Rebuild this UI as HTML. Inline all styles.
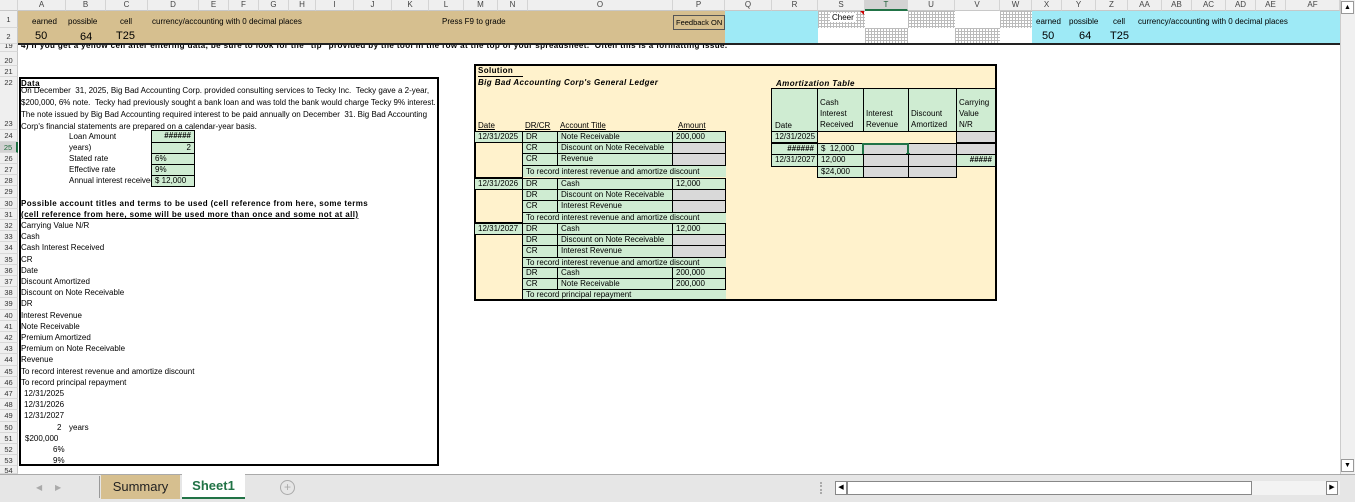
<!DOCTYPE html>
<html><head><meta charset="utf-8"><style>
*{margin:0;padding:0;box-sizing:border-box}
body{width:1355px;height:502px;overflow:hidden;background:#fff;font-family:"Liberation Sans",Arial,sans-serif;font-size:8px;color:#000;position:relative}
div{position:absolute;white-space:nowrap;line-height:11px}
.ch{top:0;height:11px;background:#efefef;border-right:1px solid #d4d4d4;border-bottom:1px solid #c8c8c8;text-align:center;color:#444;font-size:8px;line-height:10px}
.rl{left:0;width:18px;background:#efefef;border-bottom:1px solid #d8d8d8;border-right:1px solid #c8c8c8;text-align:center;color:#333;font-size:7.5px;height:11.2px;line-height:11px}
.g{background:#cfecd2;border:1px solid #000;padding-left:3px}
.gy{background:#d9d9d9;border:1px solid #000}
.b{font-weight:bold;letter-spacing:.4px}
.hatch{background-color:#fff;background-image:linear-gradient(#bbb 1px,transparent 1px),linear-gradient(90deg,#bbb 1px,transparent 1px);background-size:3px 3px}
</style></head><body>
<!-- column headers -->
<div class="ch" style="left:0;width:18px"></div>
<div class="ch" style="left:18px;width:48px">A</div>
<div class="ch" style="left:66px;width:40px">B</div>
<div class="ch" style="left:106px;width:42px">C</div>
<div class="ch" style="left:148px;width:51px">D</div>
<div class="ch" style="left:199px;width:30px">E</div>
<div class="ch" style="left:229px;width:30px">F</div>
<div class="ch" style="left:259px;width:30px">G</div>
<div class="ch" style="left:289px;width:27px">H</div>
<div class="ch" style="left:316px;width:38px">I</div>
<div class="ch" style="left:354px;width:38px">J</div>
<div class="ch" style="left:392px;width:37px">K</div>
<div class="ch" style="left:429px;width:35px">L</div>
<div class="ch" style="left:464px;width:34px">M</div>
<div class="ch" style="left:498px;width:30px">N</div>
<div class="ch" style="left:528px;width:145px">O</div>
<div class="ch" style="left:673px;width:52px">P</div>
<div class="ch" style="left:725px;width:47px">Q</div>
<div class="ch" style="left:772px;width:46px">R</div>
<div class="ch" style="left:818px;width:47px">S</div>
<div class="ch" style="left:865px;width:43px;background:#d3d3d3;border-bottom:2px solid #217346;color:#1e5e37">T</div>
<div class="ch" style="left:908px;width:47px">U</div>
<div class="ch" style="left:955px;width:45px">V</div>
<div class="ch" style="left:1000px;width:32px">W</div>
<div class="ch" style="left:1032px;width:30px">X</div>
<div class="ch" style="left:1062px;width:34px">Y</div>
<div class="ch" style="left:1096px;width:32px">Z</div>
<div class="ch" style="left:1128px;width:34px">AA</div>
<div class="ch" style="left:1162px;width:30px">AB</div>
<div class="ch" style="left:1192px;width:34px">AC</div>
<div class="ch" style="left:1226px;width:30px">AD</div>
<div class="ch" style="left:1256px;width:30px">AE</div>
<div class="ch" style="left:1286px;width:54px">AF</div>

<!-- rows 1-2 band -->
<div style="left:18px;top:11px;width:707px;height:33px;background:#d6bf8f"></div>
<div style="left:725px;top:11px;width:93px;height:33px;background:#9eeaf6"></div>
<div style="left:1032px;top:11px;width:308px;height:33px;background:#9eeaf6"></div>
<div class="hatch" style="left:818px;top:11px;width:47px;height:17px"></div>
<div class="hatch" style="left:865px;top:28px;width:43px;height:16px"></div>
<div class="hatch" style="left:908px;top:11px;width:47px;height:17px"></div>
<div class="hatch" style="left:955px;top:28px;width:45px;height:16px"></div>
<div class="hatch" style="left:1000px;top:11px;width:32px;height:17px"></div>
<div style="left:830px;top:13px;background:#fff;padding:0 2px;line-height:9px">Cheer</div>
<div style="left:860px;top:11px;width:0;height:0;border-left:4px solid transparent;border-top:4px solid #c00"></div>
<div style="left:673px;top:15px;width:52px;height:15px;border:1px solid #555;line-height:13px;padding-left:2px;overflow:hidden;font-size:7.5px">Feedback ON</div>
<div style="left:18px;top:43px;width:1322px;height:1.5px;background:#222"></div>

<div style="left:32px;top:16px">earned</div>
<div style="left:68px;top:16px">possible</div>
<div style="left:120px;top:16px">cell</div>
<div style="left:152px;top:16px">currency/accounting with 0 decimal places</div>
<div style="left:442px;top:16px">Press F9 to grade</div>
<div style="left:35px;top:30px;font-size:11px;line-height:13px">50</div>
<div style="left:80px;top:31px;font-size:11px;line-height:13px">64</div>
<div style="left:116px;top:30px;font-size:11px;line-height:13px">T25</div>
<div style="left:1036px;top:16px">earned</div>
<div style="left:1069px;top:16px">possible</div>
<div style="left:1113px;top:16px">cell</div>
<div style="left:1138px;top:16px">currency/accounting with 0 decimal places</div>
<div style="left:1042px;top:30px;font-size:11px;line-height:13px">50</div>
<div style="left:1079px;top:30px;font-size:11px;line-height:13px">64</div>
<div style="left:1110px;top:30px;font-size:11px;line-height:13px">T25</div>

<!-- row labels -->
<div class="rl" style="top:11px;height:17px;line-height:17px">1</div>
<div class="rl" style="top:28px;height:16px;line-height:18px">2</div>
<div class="rl" style="top:44px;height:8px;line-height:4px;overflow:hidden">19</div>
<div class="rl" style="top:52px;height:14px;line-height:18px">20</div>
<div class="rl" style="top:66px;height:11px">21</div>
<div class="rl" style="top:77px;height:11px;border-bottom:0">22</div>
<div class="rl" style="top:88px;height:42px;line-height:72px">23</div>
<div class="rl" style="top:130.4px">24</div>
<div class="rl" style="top:141.6px;background:#d2d2d2;color:#1e6b3a;border-right:2px solid #217346">25</div>
<div class="rl" style="top:152.8px">26</div>
<div class="rl" style="top:164px">27</div>
<div class="rl" style="top:175.2px">28</div>
<div class="rl" style="top:186.4px">29</div>
<div class="rl" style="top:197.6px">30</div>
<div class="rl" style="top:208.8px">31</div>
<div class="rl" style="top:220px">32</div>
<div class="rl" style="top:231.2px">33</div>
<div class="rl" style="top:242.4px">34</div>
<div class="rl" style="top:253.6px">35</div>
<div class="rl" style="top:264.8px">36</div>
<div class="rl" style="top:276px">37</div>
<div class="rl" style="top:287.2px">38</div>
<div class="rl" style="top:298.4px">39</div>
<div class="rl" style="top:309.6px">40</div>
<div class="rl" style="top:320.8px">41</div>
<div class="rl" style="top:332px">42</div>
<div class="rl" style="top:343.2px">43</div>
<div class="rl" style="top:354.4px">44</div>
<div class="rl" style="top:365.6px">45</div>
<div class="rl" style="top:376.8px">46</div>
<div class="rl" style="top:388px">47</div>
<div class="rl" style="top:399.2px">48</div>
<div class="rl" style="top:410.4px">49</div>
<div class="rl" style="top:421.6px">50</div>
<div class="rl" style="top:432.8px">51</div>
<div class="rl" style="top:444px">52</div>
<div class="rl" style="top:455.2px">53</div>
<div class="rl" style="top:466.4px;height:8px;line-height:10px;overflow:hidden">54</div>

<!-- row 19 (partially hidden) -->
<div style="left:21px;top:45px;width:1300px;height:6px;overflow:hidden">
<div class="b" style="left:0;top:-5px;line-height:11px">4) If you get a yellow cell after entering data, be sure to look for the "tip" provided by the tool in the row at the top of your spreadsheet.&nbsp; Often this is a formatting issue.</div>
</div>

<!-- Left data box -->
<div style="left:19px;top:77px;width:420px;height:389px;border:2px solid #000"></div>
<div class="b" style="left:21px;top:78px;text-decoration:underline">Data</div>
<div style="left:21px;top:85px;line-height:12px;white-space:normal;width:416px">On December &nbsp;31, 2025, Big Bad Accounting Corp. provided consulting services to Tecky Inc. &nbsp;Tecky gave a 2-year, $200,000, 6% note. &nbsp;Tecky had previously sought a bank loan and was told the bank would charge Tecky 9% interest. The note issued by Big Bad Accounting required interest to be paid annually on December &nbsp;31. Big Bad Accounting Corp's financial statements are prepared on a calendar-year basis.</div>
<div style="left:69px;top:131px">Loan Amount</div>
<div style="left:69px;top:141.6px">years)</div>
<div style="left:69px;top:152.8px">Stated rate</div>
<div style="left:69px;top:164px">Effective rate</div>
<div style="left:69px;top:175.2px;width:83px;overflow:hidden">Annual interest received</div>
<div class="g" style="left:151px;top:130.4px;width:44px;height:12.2px;text-align:right;padding-right:3px;font-weight:bold;line-height:10px">######</div>
<div class="g" style="left:151px;top:141.6px;width:44px;height:12.2px;text-align:right;padding-right:3px;line-height:10px">2</div>
<div class="g" style="left:151px;top:152.8px;width:44px;height:12.2px;line-height:10px">6%</div>
<div class="g" style="left:151px;top:164px;width:44px;height:12.2px;line-height:10px">9%</div>
<div class="g" style="left:151px;top:175.2px;width:44px;height:12.2px;line-height:10px">$ 12,000</div>
<div class="b" style="left:21px;top:197.6px">Possible account titles and terms to be used (cell reference from here, some terms</div>
<div class="b" style="left:21px;top:208.8px;text-decoration:underline">(cell reference from here, some will be used more than once and some not at all)</div>
<div style="left:21px;top:220px">Carrying Value N/R</div>
<div style="left:21px;top:231.2px">Cash</div>
<div style="left:21px;top:242.4px">Cash Interest Received</div>
<div style="left:21px;top:253.6px">CR</div>
<div style="left:21px;top:264.8px">Date</div>
<div style="left:21px;top:276px">Discount Amortized</div>
<div style="left:21px;top:287.2px">Discount on Note Receivable</div>
<div style="left:21px;top:298.4px">DR</div>
<div style="left:21px;top:309.6px">Interest Revenue</div>
<div style="left:21px;top:320.8px">Note Receivable</div>
<div style="left:21px;top:332px">Premium Amortized</div>
<div style="left:21px;top:343.2px">Premium on Note Receivable</div>
<div style="left:21px;top:354.4px">Revenue</div>
<div style="left:21px;top:365.6px">To record interest revenue and amortize discount</div>
<div style="left:21px;top:376.8px">To record principal repayment</div>
<div style="left:24px;top:388px">12/31/2025</div>
<div style="left:24px;top:399.2px">12/31/2026</div>
<div style="left:24px;top:410.4px">12/31/2027</div>
<div style="left:57px;top:421.6px">2</div>
<div style="left:69px;top:421.6px">years</div>
<div style="left:25px;top:432.8px">$200,000</div>
<div style="left:53px;top:444px">6%</div>
<div style="left:53px;top:455.2px">9%</div>

<!-- Ledger box -->
<div style="left:474px;top:64px;width:523px;height:237px;border:2px solid #000;background:#fff2cc"></div>
<div class="b" style="left:478px;top:66px;border-bottom:1px solid #000;width:45px;line-height:10px">Solution</div>
<div class="b" style="left:478px;top:77px;font-style:italic">Big Bad Accounting Corp's General Ledger</div>
<div style="left:478px;top:120px;text-decoration:underline">Date</div>
<div style="left:525px;top:120px;text-decoration:underline">DR/CR</div>
<div style="left:560px;top:120px;text-decoration:underline">Account Title</div>
<div style="left:678px;top:120px;text-decoration:underline">Amount</div>

<div style="left:474px;top:131px;width:49px;height:47px;border:1px solid #000"></div>
<div style="left:474px;top:178px;width:49px;height:45px;border:1px solid #000"></div>
<div style="left:474px;top:223px;width:49px;height:78px;border:1px solid #000"></div>
<div class="g" style="left:474px;top:131px;width:49px;height:12.2px;line-height:10px">12/31/2025</div>
<div class="g" style="left:474px;top:178px;width:49px;height:12.2px;line-height:10px">12/31/2026</div>
<div class="g" style="left:474px;top:223px;width:49px;height:12.2px;line-height:10px">12/31/2027</div>

<div class="g" style="left:522px;top:131px;width:36px;height:12.2px;line-height:10px">DR</div><div class="g" style="left:557px;top:131px;width:116px;height:12.2px;line-height:10px">Note Receivable</div><div class="g" style="left:672px;top:131px;width:54px;height:12.2px;line-height:10px">200,000</div>
<div class="g" style="left:522px;top:142.2px;width:36px;height:12.2px;line-height:10px">CR</div><div class="g" style="left:557px;top:142.2px;width:116px;height:12.2px;line-height:10px">Discount on Note Receivable</div><div class="gy" style="left:672px;top:142.2px;width:54px;height:12.2px"></div>
<div class="g" style="left:522px;top:153.4px;width:36px;height:12.2px;line-height:10px">CR</div><div class="g" style="left:557px;top:153.4px;width:116px;height:12.2px;line-height:10px">Revenue</div><div class="gy" style="left:672px;top:153.4px;width:54px;height:12.2px"></div>
<div style="left:523px;top:165.6px;width:203px;height:11.2px;background:#cfecd2;padding-left:3px;line-height:11px">To record interest revenue and amortize discount</div>

<div class="g" style="left:522px;top:178px;width:36px;height:12.2px;line-height:10px">DR</div><div class="g" style="left:557px;top:178px;width:116px;height:12.2px;line-height:10px">Cash</div><div class="g" style="left:672px;top:178px;width:54px;height:12.2px;line-height:10px">12,000</div>
<div class="g" style="left:522px;top:189.2px;width:36px;height:12.2px;line-height:10px">DR</div><div class="g" style="left:557px;top:189.2px;width:116px;height:12.2px;line-height:10px">Discount on Note Receivable</div><div class="gy" style="left:672px;top:189.2px;width:54px;height:12.2px"></div>
<div class="g" style="left:522px;top:200.4px;width:36px;height:12.2px;line-height:10px">CR</div><div class="g" style="left:557px;top:200.4px;width:116px;height:12.2px;line-height:10px">Interest Revenue</div><div class="gy" style="left:672px;top:200.4px;width:54px;height:12.2px"></div>
<div style="left:523px;top:212.6px;width:203px;height:10.4px;background:#cfecd2;padding-left:3px;line-height:10px">To record interest revenue and amortize discount</div>

<div class="g" style="left:522px;top:223px;width:36px;height:12.2px;line-height:10px">DR</div><div class="g" style="left:557px;top:223px;width:116px;height:12.2px;line-height:10px">Cash</div><div class="g" style="left:672px;top:223px;width:54px;height:12.2px;line-height:10px">12,000</div>
<div class="g" style="left:522px;top:234.2px;width:36px;height:12.2px;line-height:10px">DR</div><div class="g" style="left:557px;top:234.2px;width:116px;height:12.2px;line-height:10px">Discount on Note Receivable</div><div class="gy" style="left:672px;top:234.2px;width:54px;height:12.2px"></div>
<div class="g" style="left:522px;top:245.4px;width:36px;height:12.2px;line-height:10px">CR</div><div class="g" style="left:557px;top:245.4px;width:116px;height:12.2px;line-height:10px">Interest Revenue</div><div class="gy" style="left:672px;top:245.4px;width:54px;height:12.2px"></div>
<div style="left:523px;top:257.6px;width:203px;height:10.4px;background:#cfecd2;padding-left:3px;line-height:10px">To record interest revenue and amortize discount</div>

<div class="g" style="left:522px;top:267px;width:36px;height:12.2px;line-height:10px">DR</div><div class="g" style="left:557px;top:267px;width:116px;height:12.2px;line-height:10px">Cash</div><div class="g" style="left:672px;top:267px;width:54px;height:12.2px;line-height:10px">200,000</div>
<div class="g" style="left:522px;top:278.2px;width:36px;height:12.2px;line-height:10px">CR</div><div class="g" style="left:557px;top:278.2px;width:116px;height:12.2px;line-height:10px">Note Receivable</div><div class="g" style="left:672px;top:278.2px;width:54px;height:12.2px;line-height:10px">200,000</div>
<div style="left:523px;top:290.4px;width:203px;height:8.6px;background:#cfecd2;padding-left:3px;line-height:10px;overflow:hidden">To record principal repayment</div>

<!-- Amortization table -->
<div class="b" style="left:776px;top:78px;font-style:italic">Amortization Table</div>
<div class="g" style="left:771px;top:88px;width:47px;height:44px"></div>
<div class="g" style="left:817px;top:88px;width:47px;height:44px"></div>
<div class="g" style="left:863px;top:88px;width:46px;height:44px"></div>
<div class="g" style="left:908px;top:88px;width:49px;height:44px"></div>
<div class="g" style="left:956px;top:88px;width:40px;height:44px"></div>
<div style="left:775px;top:120px">Date</div>
<div style="left:820px;top:97px;line-height:11px">Cash<br>Interest<br>Received</div>
<div style="left:866px;top:108px;line-height:11px">Interest<br>Revenue</div>
<div style="left:911px;top:108px;line-height:11px">Discount<br>Amortized</div>
<div style="left:959px;top:97px;line-height:11px">Carrying<br>Value<br>N/R</div>

<div class="g" style="left:771px;top:131px;width:47px;height:12.2px;line-height:10px">12/31/2025</div>
<div class="gy" style="left:956px;top:131px;width:40px;height:12.2px"></div>
<div class="g" style="left:771px;top:143.2px;width:47px;height:12.2px;line-height:10px;text-align:right;padding-right:3px;font-weight:bold">######</div>
<div class="g" style="left:817px;top:143.2px;width:47px;height:12.2px;line-height:10px">$ &nbsp;12,000</div>
<div class="gy" style="left:863px;top:143.2px;width:46px;height:12.2px"></div>
<div class="gy" style="left:908px;top:143.2px;width:49px;height:12.2px"></div>
<div class="gy" style="left:956px;top:143.2px;width:40px;height:12.2px"></div>
<div style="left:862px;top:142.5px;width:47px;height:13px;border:2px solid #217346"></div>
<div style="left:906px;top:153px;width:4px;height:4px;background:#217346"></div>
<div class="g" style="left:771px;top:154.4px;width:47px;height:12.2px;line-height:10px">12/31/2027</div>
<div class="g" style="left:817px;top:154.4px;width:47px;height:12.2px;line-height:10px">12,000</div>
<div class="gy" style="left:863px;top:154.4px;width:46px;height:12.2px"></div>
<div class="gy" style="left:908px;top:154.4px;width:49px;height:12.2px"></div>
<div class="g" style="left:956px;top:154.4px;width:40px;height:12.2px;line-height:10px;text-align:right;padding-right:3px;font-weight:bold">#####</div>
<div class="g" style="left:817px;top:165.6px;width:47px;height:12.2px;line-height:10px">$24,000</div>
<div class="gy" style="left:863px;top:165.6px;width:46px;height:12.2px"></div>
<div class="gy" style="left:908px;top:165.6px;width:49px;height:12.2px"></div>

<!-- vertical scrollbar -->
<div style="left:1340px;top:0;width:15px;height:474px;background:#f0f0f0;border-left:1px solid #ccc"></div>
<div style="left:1341px;top:1px;width:13px;height:13px;border:1px solid #999;background:#fff;text-align:center;font-size:7px;line-height:12px">▲</div>
<div style="left:1341px;top:459px;width:13px;height:13px;border:1px solid #999;background:#fff;text-align:center;font-size:7px;line-height:12px">▼</div>

<!-- bottom bar -->
<div style="left:0;top:474px;width:1355px;height:28px;background:#e6e6e6;border-top:1px solid #aaa"></div>
<div style="left:36px;top:482px;color:#aaa;font-size:8px">◀</div>
<div style="left:55px;top:482px;color:#aaa;font-size:8px">▶</div>
<div style="left:99px;top:476px;width:1px;height:22px;background:#999"></div>
<div style="left:101px;top:475px;width:79px;height:24px;background:#d6bf8f;font-size:13px;line-height:24px;text-align:center;color:#222">Summary</div>
<div style="left:182px;top:474px;width:63px;height:25px;background:#fff;border-bottom:2px solid #217346;font-size:13px;font-weight:bold;line-height:24px;text-align:center;color:#217346">Sheet1</div>
<div style="left:280px;top:480px;width:15px;height:15px;border:1px solid #aaa;border-radius:50%;text-align:center;color:#aaa;font-size:12px;line-height:13px">+</div>
<div style="left:820px;top:482px;width:2px;height:12px;border-left:2px dotted #aaa"></div>
<div style="left:835px;top:481px;width:505px;height:14px;background:#f3f3f3"></div>
<div style="left:835px;top:481px;width:12px;height:14px;border:1px solid #888;background:#fff;font-size:7px;line-height:12px;text-align:center">◀</div>
<div style="left:847px;top:481px;width:405px;height:14px;border:1px solid #888;background:#fff"></div>
<div style="left:1326px;top:481px;width:12px;height:14px;border:1px solid #888;background:#fff;font-size:7px;line-height:12px;text-align:center">▶</div>
</body></html>
